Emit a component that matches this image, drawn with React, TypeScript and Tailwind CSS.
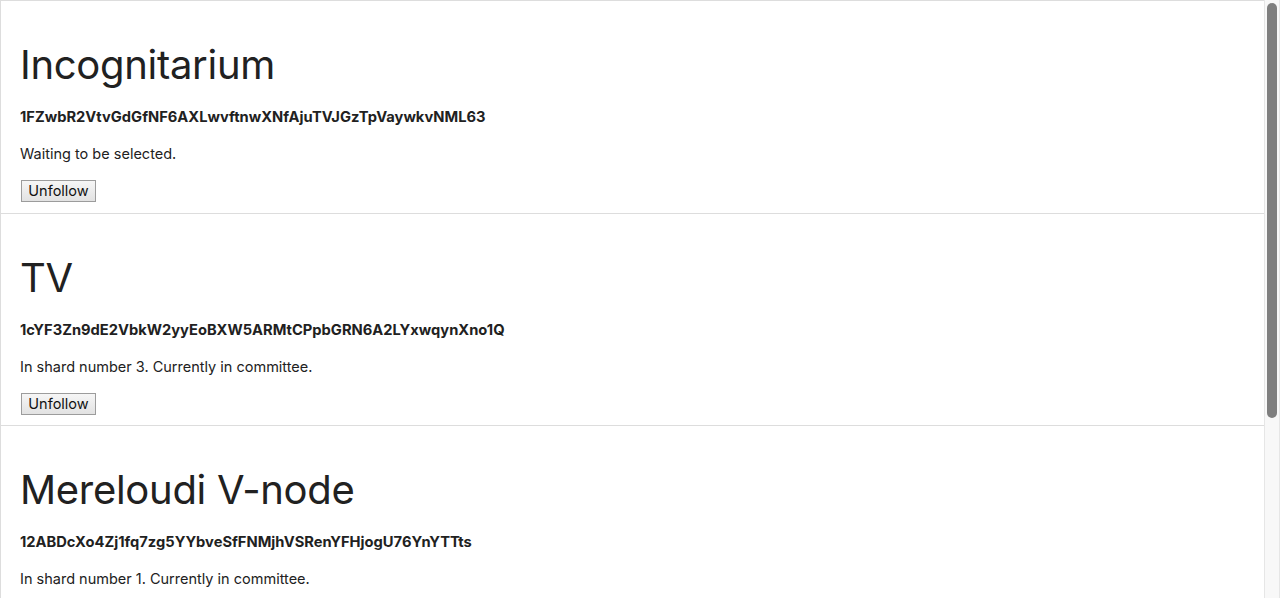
import React from "react";

const nodes = [
  { name: "Incognitarium", key: "1FZwbR2VtvGdGfNF6AXLwvftnwXNfAjuTVJGzTpVaywkvNML63", status: "Waiting to be selected." },
  { name: "TV", key: "1cYF3Zn9dE2VbkW2yyEoBXW5ARMtCPpbGRN6A2LYxwqynXno1Q", status: "In shard number 3. Currently in committee." },
  { name: "Mereloudi V-node", key: "12ABDcXo4Zj1fq7zg5YYbveSfFNMjhVSRenYFHjogU76YnYTTts", status: "In shard number 1. Currently in committee." },
  { name: "Stakerland", key: "1Ct8fPbM3qkBXkZtZTH8vBTaVPmgeAcjzH9F8ZRpSGfm9Qdt4A", status: "Waiting to be selected." },
];

export default function App() {
  return (
    <div
      className="flex h-[598px] overflow-hidden bg-white text-[#212121]"
      style={{ fontFamily: 'Inter, "Liberation Sans", Arial, sans-serif' }}
    >
      <div className="flex-1 overflow-hidden">
        <div className="border-l border-t border-[#dddddd]">
          {nodes.map((n) => (
            <div key={n.name} className="border-b border-[#dddddd] pl-[19px] pr-5 pb-[10.5px]">
              <h1 className="mt-[39px] text-[40px] leading-[50px] font-normal tracking-[-0.3px]">{n.name}</h1>
              <div className="mt-[17px] text-[14.7px] leading-[20px] font-bold">{n.key}</div>
              <p className="mt-[17px] text-[14.5px] leading-[20px]">{n.status}</p>
              <button className="mt-[16px] ml-px h-[22px] w-[75px] border border-[#9c9c9c] bg-gradient-to-b from-[#f6f6f6] to-[#e2e2e2] text-[14.5px] leading-[18px] text-[#111]">
                Unfollow
              </button>
            </div>
          ))}
        </div>
      </div>
      <div className="flex w-[16px] shrink-0 flex-col border-l border-r border-[#e6e6e6] bg-[#f8f8f8] px-[2px] pt-[3px]">
        <div className="h-[415px] w-full rounded-full bg-[#7f7f7f]" />
      </div>
    </div>
  );
}
